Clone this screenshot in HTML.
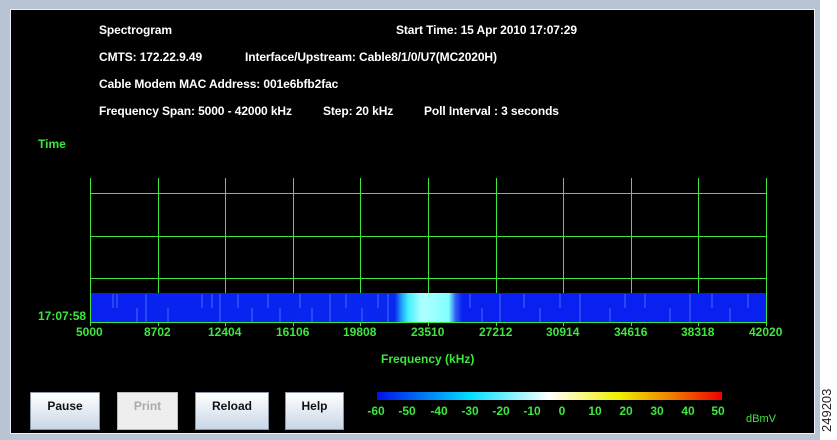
<!DOCTYPE html>
<html><head><style>
body{margin:0;width:837px;height:440px;background:#fff;position:relative;overflow:hidden;font-family:"Liberation Sans",sans-serif;font-weight:bold}
#frame{position:absolute;left:0;top:0;width:820px;height:440px;background:#b8c4d4}
#panel{position:absolute;left:10px;top:9px;width:803px;height:423px;background:#000;border:1px solid #eef}
.t{position:absolute;color:#fff;font-size:12px;white-space:nowrap;letter-spacing:-0.1px}
.g{position:absolute;color:#3ee63e;font-size:12px;white-space:nowrap}
.c{position:absolute;color:#3ee63e;font-size:12px;top:404px;width:30px;text-align:center}
.btn{position:absolute;top:392px;height:36px;background:linear-gradient(#fff,#c8d6e8);border:1px solid #8a97a8;font-size:12px;text-align:center;line-height:26px;color:#111}
#num{position:absolute;left:819px;top:432px;transform:rotate(-90deg);transform-origin:0 0;font-family:"Liberation Sans";font-weight:normal;font-size:13px;color:#222}
</style></head><body>
<div id="frame"></div>
<div id="panel"></div>
<div class="t" style="left:99px;top:23px">Spectrogram</div>
<div class="t" style="left:396px;top:23px">Start Time: 15 Apr 2010 17:07:29</div>
<div class="t" style="left:99px;top:50px">CMTS: 172.22.9.49</div>
<div class="t" style="left:245px;top:50px">Interface/Upstream: Cable8/1/0/U7(MC2020H)</div>
<div class="t" style="left:99px;top:77px">Cable Modem MAC Address: 001e6bfb2fac</div>
<div class="t" style="left:99px;top:104px">Frequency Span: 5000 - 42000 kHz</div>
<div class="t" style="left:323px;top:104px">Step: 20 kHz</div>
<div class="t" style="left:424px;top:104px">Poll Interval : 3 seconds</div>
<div class="g" style="left:38px;top:137px">Time</div>
<svg style="position:absolute;left:0;top:0" width="837" height="440" shape-rendering="crispEdges">
<g fill="#3ee63e">
<rect x="90" y="193" width="677" height="1"/><rect x="90" y="236" width="677" height="1"/><rect x="90" y="278" width="677" height="1"/><rect x="90" y="322" width="677" height="1"/>
<rect x="90" y="178" width="1" height="148"/><rect x="158" y="178" width="1" height="148"/><rect x="225" y="178" width="1" height="148"/><rect x="293" y="178" width="1" height="148"/><rect x="360" y="178" width="1" height="148"/><rect x="428" y="178" width="1" height="148"/><rect x="496" y="178" width="1" height="148"/><rect x="563" y="178" width="1" height="148"/><rect x="631" y="178" width="1" height="148"/><rect x="698" y="178" width="1" height="148"/><rect x="766" y="178" width="1" height="148"/>
</g>
<defs><linearGradient id="sp" x1="0" x2="1"><stop offset="0" stop-color="#0820f0"/><stop offset=".45" stop-color="#0828f0"/><stop offset=".46" stop-color="#20a0f8"/><stop offset=".47" stop-color="#40f0ff"/><stop offset=".49" stop-color="#b0ffff"/><stop offset=".53" stop-color="#80ffff"/><stop offset=".54" stop-color="#3060f8"/><stop offset=".55" stop-color="#0820f0"/><stop offset="1" stop-color="#0820f0"/></linearGradient>
<linearGradient id="cb" x1="0" x2="1"><stop offset="0" stop-color="#0010e8"/><stop offset=".27" stop-color="#00e0ff"/><stop offset=".5" stop-color="#fff"/><stop offset=".7" stop-color="#f0f000"/><stop offset=".85" stop-color="#f08000"/><stop offset="1" stop-color="#f00000"/></linearGradient></defs>
<rect x="91" y="293" width="675" height="29" fill="url(#sp)"/>
<g stroke="#4a6af8" stroke-width="1">
<path d="M113 294v14M117 294v14M137 308v14M146 294v28M168 308v14M202 294v14M212 294v14M220 294v28M238 294v14M252 308v14M268 294v14M280 308v14M300 294v14M312 308v14M330 294v28M346 294v14M362 308v14M378 294v14M388 294v28M470 294v14M482 308v14M500 294v28M524 294v14M540 308v14M560 294v14M580 294v28M610 308v14M625 294v14M645 294v14M670 308v14M690 294v28M712 294v14M730 308v14M748 294v14"/></g>
<rect x="377" y="392" width="345" height="8" fill="url(#cb)"/>
</svg>
<div class="g" style="left:38px;top:309px">17:07:58</div>
<div class="g" style="left:76px;top:325px">5000</div>
<div class="g" style="left:144px;top:325px">8702</div>
<div class="g" style="left:208px;top:325px">12404</div>
<div class="g" style="left:276px;top:325px">16106</div>
<div class="g" style="left:343px;top:325px">19808</div>
<div class="g" style="left:411px;top:325px">23510</div>
<div class="g" style="left:479px;top:325px">27212</div>
<div class="g" style="left:546px;top:325px">30914</div>
<div class="g" style="left:614px;top:325px">34616</div>
<div class="g" style="left:681px;top:325px">38318</div>
<div class="g" style="left:749px;top:325px">42020</div>
<div class="g" style="left:381px;top:352px">Frequency (kHz)</div>
<div class="c" style="left:361px">-60</div>
<div class="c" style="left:392px">-50</div>
<div class="c" style="left:424px">-40</div>
<div class="c" style="left:455px">-30</div>
<div class="c" style="left:486px">-20</div>
<div class="c" style="left:517px">-10</div>
<div class="c" style="left:547px">0</div>
<div class="c" style="left:580px">10</div>
<div class="c" style="left:611px">20</div>
<div class="c" style="left:642px">30</div>
<div class="c" style="left:673px">40</div>
<div class="c" style="left:703px">50</div>
<div class="g" style="left:746px;top:413px;font-weight:normal;font-size:11px">dBmV</div>
<div class="btn" style="left:30px;width:68px">Pause</div>
<div class="btn" style="left:117px;width:59px;background:#eee;color:#aaa;border-color:#bbb">Print</div>
<div class="btn" style="left:195px;width:72px">Reload</div>
<div class="btn" style="left:285px;width:57px">Help</div>
<div id="num">249203</div>
</body></html>
